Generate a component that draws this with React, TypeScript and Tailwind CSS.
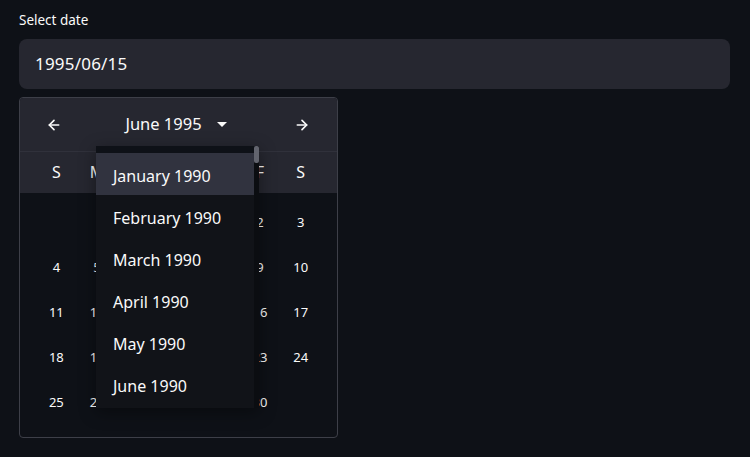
import { ArrowLeft, ArrowRight } from "lucide-react";

const weekdays = ["S", "M", "T", "W", "T", "F", "S"];

// June 1995 starts on a Thursday
const weeks: (number | null)[][] = [
  [null, null, null, null, 1, 2, 3],
  [4, 5, 6, 7, 8, 9, 10],
  [11, 12, 13, 14, 15, 16, 17],
  [18, 19, 20, 21, 22, 23, 24],
  [25, 26, 27, 28, 29, 30, null],
];

const months = ["January 1990", "February 1990", "March 1990", "April 1990", "May 1990", "June 1990"];

export default function App() {
  return (
    <div
      className="w-[750px] h-[457px] bg-[#0e1117] text-[#fafafa] overflow-hidden"
      style={{ fontFamily: '"Noto Sans", "Open Sans", sans-serif' }}
    >
      <div className="px-[19px] pt-[11px]">
        <label className="block text-[13.5px] leading-[18px] h-[28px]">Select date</label>

        <div className="h-[50px] w-[711px] rounded-[8px] bg-[#262730] flex items-center px-4">
          <span className="text-[17px] tracking-[0.2px]">1995/06/15</span>
        </div>

        <div className="relative mt-[8px] w-[319px] h-[341px] rounded-[4px] border border-[#3d3f48] overflow-hidden">
          <div className="bg-[#262730]">
            <div className="h-[53px] flex items-center justify-between pl-[26px] pr-[27px]">
              <ArrowLeft size={16} strokeWidth={2.5} />
              <div className="flex items-center gap-[15px] mr-[4px]">
                <span className="text-[16.5px]">June 1995</span>
                <svg width="10" height="6" viewBox="0 0 10 6" className="mt-[1px]">
                  <path d="M0 0 L10 0 L5 5 Z" fill="#fafafa" />
                </svg>
              </div>
              <ArrowRight size={16} strokeWidth={2.5} />
            </div>
            <div className="h-[42px] border-t border-[#30313b] grid grid-cols-7 px-[16px] items-center">
              {weekdays.map((d, i) => (
                <span key={i} className="text-center text-[16px] -mt-[2px]">
                  {d}
                </span>
              ))}
            </div>
          </div>

          <div className="px-[16px] pt-[7px] flex flex-col">
            {weeks.map((w, wi) => (
              <div key={wi} className="grid grid-cols-7 h-[45px] items-center">
                {w.map((d, di) => (
                  <span key={di} className="text-center text-[13px]">
                    {d ?? ""}
                  </span>
                ))}
              </div>
            ))}
          </div>

          <div className="absolute left-[76px] top-[48px] w-[163px] h-[262px] bg-[#111318] shadow-[0_4px_16px_rgba(0,0,0,0.4)] flex">
            <div className="flex-1 flex flex-col">
              <div className="h-[7px] bg-[#0e1117]" />
              {months.map((m, i) => (
                <div
                  key={m}
                  className={`h-[42px] flex items-center pl-[17px] pt-[3px] text-[16px] ${
                    i === 0 ? "bg-[#31333f]" : ""
                  }`}
                >
                  {m}
                </div>
              ))}
            </div>
            <div className="w-[5px] bg-[#0b0d11]">
              <div className="h-[17px] rounded-[2px] bg-[#62646e]" />
            </div>
          </div>
        </div>
      </div>
    </div>
  );
}
